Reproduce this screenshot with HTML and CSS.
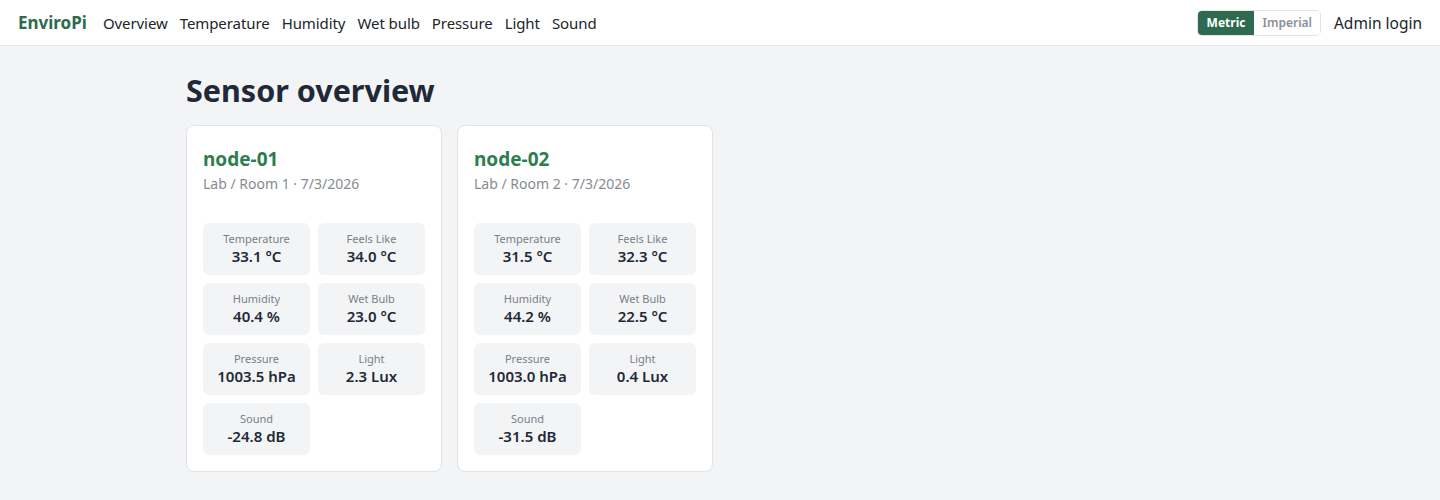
FILE: index.html
```html
<!DOCTYPE html>
<html lang="en">
<head>
<meta charset="UTF-8" />
<meta name="viewport" content="width=device-width, initial-scale=1" />
<title>EnviroPi</title>
<link rel="stylesheet" href="styles.css">
</head>
<body>
<nav class="navbar">
  <a class="brand" href="#">EnviroPi</a>
  <ul class="nav-links">
    <li><a href="#">Overview</a></li>
    <li><a href="#">Temperature</a></li>
    <li><a href="#">Humidity</a></li>
    <li><a href="#">Wet bulb</a></li>
    <li><a href="#">Pressure</a></li>
    <li><a href="#">Light</a></li>
    <li><a href="#">Sound</a></li>
  </ul>
  <div class="nav-right">
    <div class="unit-toggle">
      <button class="active">Metric</button>
      <button>Imperial</button>
    </div>
    <a class="login" href="#">Admin login</a>
  </div>
</nav>

<main class="container">
  <h1>Sensor overview</h1>

  <div class="cards">
    <section class="card">
      <h2 class="node-name">node-01</h2>
      <p class="node-meta">Lab / Room 1 · 7/3/2026</p>
      <div class="metrics">
        <div class="metric"><span class="label">Temperature</span><span class="value">33.1 °C</span></div>
        <div class="metric"><span class="label">Feels Like</span><span class="value">34.0 °C</span></div>
        <div class="metric"><span class="label">Humidity</span><span class="value">40.4 %</span></div>
        <div class="metric"><span class="label">Wet Bulb</span><span class="value">23.0 °C</span></div>
        <div class="metric"><span class="label">Pressure</span><span class="value">1003.5 hPa</span></div>
        <div class="metric"><span class="label">Light</span><span class="value">2.3 Lux</span></div>
        <div class="metric"><span class="label">Sound</span><span class="value">-24.8 dB</span></div>
      </div>
    </section>

    <section class="card">
      <h2 class="node-name">node-02</h2>
      <p class="node-meta">Lab / Room 2 · 7/3/2026</p>
      <div class="metrics">
        <div class="metric"><span class="label">Temperature</span><span class="value">31.5 °C</span></div>
        <div class="metric"><span class="label">Feels Like</span><span class="value">32.3 °C</span></div>
        <div class="metric"><span class="label">Humidity</span><span class="value">44.2 %</span></div>
        <div class="metric"><span class="label">Wet Bulb</span><span class="value">22.5 °C</span></div>
        <div class="metric"><span class="label">Pressure</span><span class="value">1003.0 hPa</span></div>
        <div class="metric"><span class="label">Light</span><span class="value">0.4 Lux</span></div>
        <div class="metric"><span class="label">Sound</span><span class="value">-31.5 dB</span></div>
      </div>
    </section>
  </div>
</main>
</body>
</html>
```

FILE: styles.css
```css
body {
  margin: 0;
  font-family: "Noto Sans", "Open Sans", sans-serif;
  background: #f3f4f6;
  color: #1f2937;
}
a { text-decoration: none; color: inherit; }

.navbar {
  display: flex; align-items: center;
  height: 45px; padding: 0 18px;
  background: #fff; border-bottom: 1px solid #e2e4e8;
}
.brand { font-weight: 700; font-size: 17px; color: #2d6a4f; margin-right: 16px; }
.nav-links { display: flex; gap: 12px; list-style: none; margin: 0; padding: 0; }
.nav-links a { font-size: 15px; letter-spacing: -0.08px; color: #212529; }
.nav-right { margin-left: auto; display: flex; align-items: center; gap: 13px; }
.login { font-size: 15.5px; color: #212529; }

.unit-toggle {
  display: flex; height: 24px;
  border: 1px solid #e2e4e8; border-radius: 5px; overflow: hidden;
}
.unit-toggle button {
  border: none; background: #fff; color: #8a8f98;
  font: 600 12px "Noto Sans", sans-serif;
  padding: 0 8px;
}
.unit-toggle button.active { background: #2d6a4f; color: #fff; font-weight: 700; padding: 0 9px; }

.container { max-width: 1068px; margin: 0 auto; padding-top: 26px; }
h1 { margin: 0 0 16px; font-size: 30.5px; font-weight: 700; color: #1f2937; line-height: 1.2; }

.cards { display: flex; gap: 15px; align-items: flex-start; }
.card {
  width: 222px; padding: 16px;
  background: #fff; border: 1px solid #dfe2e6; border-radius: 8px;
}
.node-name { margin: 5px 0 0; font-size: 19px; font-weight: 700; color: #2e7d4f; line-height: 1.3; }
.node-meta { margin: 3px 0 30px; font-size: 14px; color: #868b92; }

.metrics { display: grid; grid-template-columns: 1fr 1fr; gap: 8px; }
.metric {
  display: flex; flex-direction: column; align-items: center;
  height: 52px; box-sizing: border-box; padding-top: 8px;
  background: #f3f4f6; border-radius: 6px;
}
.metric .label { font-size: 11px; color: #7a7f87; line-height: 15px; }
.metric .value { font-size: 15px; font-weight: 600; color: #1f2937; line-height: 20px; }
```
